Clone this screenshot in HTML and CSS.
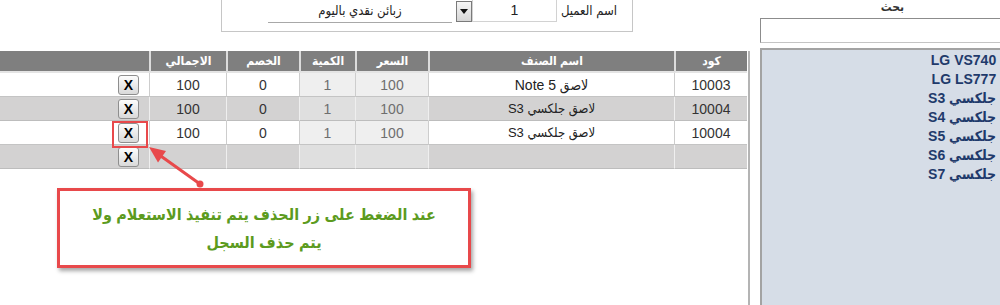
FILE: index.html
```html
<!DOCTYPE html>
<html lang="ar" dir="rtl">
<head>
<meta charset="utf-8">
<title>فاتورة</title>
<link rel="stylesheet" href="styles.css">
</head>
<body>
<div class="page">
  <aside class="side">
    <div class="search-label">بحث</div>
    <div class="search-input"></div>
    <ul class="items">
      <li>لاصق LG VS740</li>
      <li>لاصق LG LS777</li>
      <li>لاصق جلكسي S3</li>
      <li>لاصق جلكسي S4</li>
      <li>لاصق جلكسي S5</li>
      <li>لاصق جلكسي S6</li>
      <li>لاصق جلكسي S7</li>
    </ul>
  </aside>
  <main class="main">
    <div class="top">
      <div class="customer">
        <span class="cust-label">اسم العميل</span>
        <span class="cust-input">1</span>
        <span class="dd-btn"><svg width="8" height="5" viewBox="0 0 8 5"><path d="M0 0H8L4 5Z" fill="#111"/></svg></span>
        <span class="cust-select">زبائن نقدي باليوم</span>
      </div>
    </div>
    <div class="grid-wrap">
      <table class="grid">
        <colgroup>
          <col style="width:73px"><col style="width:246px"><col style="width:73px"><col style="width:56px"><col style="width:73px"><col style="width:77px"><col style="width:149px">
        </colgroup>
        <thead>
          <tr><th>كود</th><th>اسم الصنف</th><th>السعر</th><th>الكمية</th><th>الخصم</th><th>الاجمالي</th><th></th></tr>
        </thead>
        <tbody>
          <tr class="w"><td>10003</td><td class="nm">لاصق Note 5</td><td class="ro">100</td><td class="ro">1</td><td>0</td><td>100</td><td class="act"><span class="del">X</span></td></tr>
          <tr class="g"><td>10004</td><td class="nm sm">لاصق جلكسي S3</td><td class="ro">100</td><td class="ro">1</td><td>0</td><td>100</td><td class="act"><span class="del">X</span></td></tr>
          <tr class="w"><td>10004</td><td class="nm sm">لاصق جلكسي S3</td><td class="ro">100</td><td class="ro">1</td><td>0</td><td>100</td><td class="act"><span class="del">X</span></td></tr>
          <tr class="g"><td></td><td></td><td class="ro"></td><td class="ro"></td><td></td><td></td><td class="act"><span class="del">X</span></td></tr>
        </tbody>
      </table>
    </div>
  </main>
  <div class="highlight"></div>
  <svg class="arrow" width="240" height="200" viewBox="0 0 240 200">
    <line x1="200" y1="184" x2="158" y2="154" stroke="#e8494b" stroke-width="3" stroke-linecap="round"/>
    <circle cx="200" cy="184" r="3.5" fill="#e8494b"/>
    <path d="M149 147 L166 151 L158 162.5 Z" fill="#e8494b"/>
  </svg>
  <div class="callout">
    <span class="line">عند الضغط على زر الحذف يتم تنفيذ الاستعلام ولا</span>
    <span class="line">يتم حذف السجل</span>
  </div>
</div>
</body>
</html>
```
FILE: styles.css
```css
* { box-sizing: border-box; }
html, body { margin: 0; padding: 0; background: #fff; overflow: hidden; }
body {
  width: 1000px;
  height: 305px;
  font-family: "Liberation Sans", "DejaVu Sans Condensed", "DejaVu Sans", Arial, sans-serif;
  color: #222;
}
.page {
  position: relative;
  display: flex;
  flex-direction: row;
  height: 305px;
  direction: rtl;
}

/* right side: search + list */
.side {
  flex: none;
  width: 265px;
  margin-right: -25px;
  margin-left: 10px;
  display: flex;
  flex-direction: column;
}
.search-label {
  height: 18px;
  text-align: center;
  font-size: 12px;
  font-weight: bold;
  line-height: 15px;
  color: #333;
}
.search-input {
  height: 25px;
  background: #fff;
  border: 1px solid #c4c4c4;
  border-top-color: #8c8c8c;
  border-left-color: #8c8c8c;
  margin-bottom: 5px;
}
.items {
  flex: 1;
  margin: 0;
  padding: 1px 4px 0 0;
  list-style: none;
  background: #d6dde7;
  border: 2px solid #a3a3a3;
  border-bottom: none;
}
.items li {
  margin-right: -14px;
  font-size: 14px;
  font-weight: bold;
  line-height: 19px;
  color: #1f3a6b;
  white-space: nowrap;
}

/* main area */
.main {
  flex: none;
  width: 750px;
  display: flex;
  flex-direction: column;
}
.top { height: 51px; flex: none; }
.customer {
  margin-right: 117px;
  width: 412px;
  height: 32px;
  border: 1px solid #c6c6c6;
  border-top: none;
  display: flex;
  align-items: flex-start;
  padding-right: 15px;
}
.cust-label {
  flex: none;
  width: 52px;
  margin-left: 8px;
  font-size: 13px;
  line-height: 22px;
  white-space: nowrap;
}
.cust-input {
  flex: none;
  width: 85px;
  height: 22px;
  border: 1px solid #d2d2d2;
  border-top: none;
  text-align: center;
  font-size: 14px;
  line-height: 21px;
}
.dd-btn {
  flex: none;
  width: 16px;
  height: 21px;
  margin-top: 1px;
  border: 1px solid #7a7a7a;
  background: linear-gradient(#f6f6f6, #d6d6d6);
  display: flex;
  align-items: center;
  justify-content: center;
}
.cust-select {
  flex: none;
  width: 184px;
  height: 23px;
  margin-right: 4px;
  border-bottom: 1px solid #a8a8a8;
  text-align: center;
  font-size: 13px;
  line-height: 22px;
}

.grid-wrap {
  flex: 1;
  border-right: 2px solid #b4b4b4;
  padding-right: 1px;
}
.grid {
  width: 747px;
  border-collapse: separate;
  border-spacing: 0;
  table-layout: fixed;
  font-size: 14px;
}
.grid th {
  height: 22px;
  padding: 0;
  background: #7f7f7f;
  color: #fff;
  font-size: 12px;
  font-weight: bold;
  text-align: center;
  border-left: 2px solid #dcdcdc;
  border-bottom: 2px solid #e4e4e4;
}
.grid th:last-child { border-left: none; }
.grid td {
  height: 24px;
  padding: 0;
  text-align: center;
  color: #333;
  border-left: 1px solid #cdcdcd;
  border-bottom: 1px solid #c4c4c4;
  white-space: nowrap;
}
.grid td:last-child { border-left: none; }
.grid tr.w td { background: #fff; }
.grid tr.g td { background: #d3d2d2; border-left-color: #efefef; border-bottom-color: #bdbdbd; }
.grid tr.w td.ro { background: #efefef; color: #6e6e6e; }
.grid tr.g td.ro { background: #dfdfdf; color: #6e6e6e; }
.grid td.nm { color: #222; }
.grid td.sm { font-size: 13px; }
.grid td.act { text-align: right; padding-right: 10px; }
.del {
  display: inline-block;
  width: 21px;
  height: 20px;
  vertical-align: middle;
  border: 1px solid #8e8e8e;
  border-radius: 3px;
  background: linear-gradient(#fdfdfd, #d9d9d9);
  color: #000;
  font-size: 14px;
  font-weight: bold;
  line-height: 18px;
  text-align: center;
}

/* annotation overlays */
.highlight {
  position: absolute;
  left: 112px;
  top: 121px;
  width: 36px;
  height: 27px;
  border: 2px solid #e8494b;
}
.arrow {
  position: absolute;
  left: 0;
  top: 0;
  pointer-events: none;
}
.callout {
  position: absolute;
  left: 57px;
  top: 188px;
  width: 414px;
  height: 80px;
  border: 3px solid #e8494b;
  background: #fff;
  box-shadow: 2px 3px 4px rgba(0, 0, 0, 0.35);
  padding-top: 10px;
  text-align: center;
  color: #5c9b1e;
  font-size: 16px;
  font-weight: bold;
  line-height: 28px;
}
.callout .line { display: block; white-space: nowrap; }
```
